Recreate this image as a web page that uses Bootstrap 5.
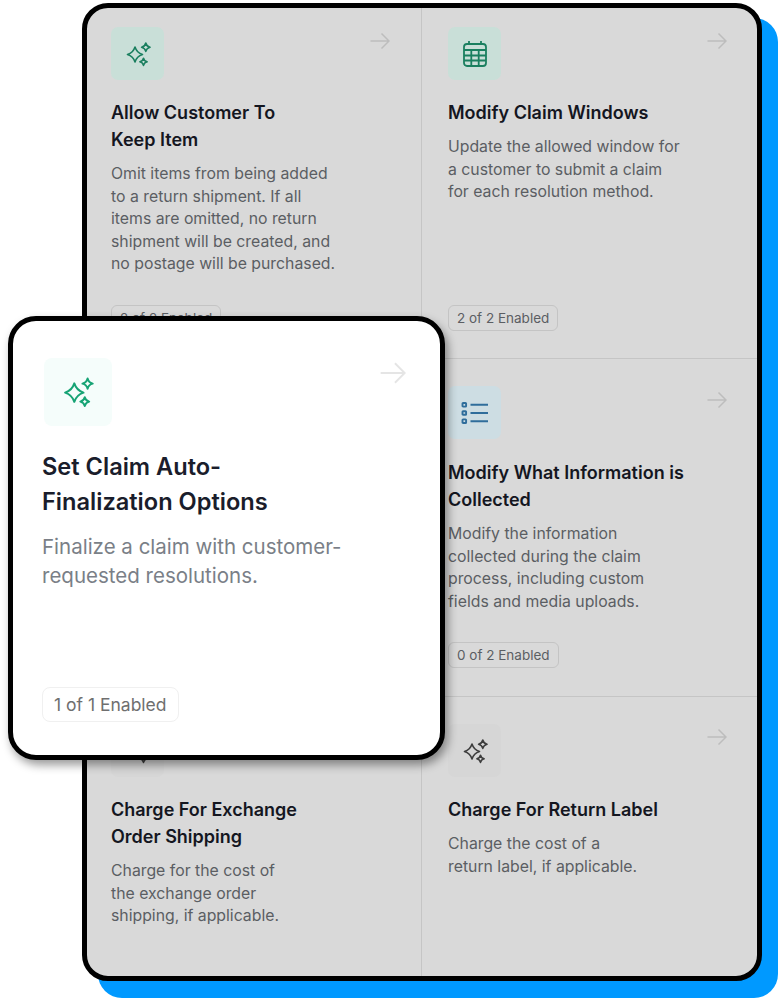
<!DOCTYPE html>
<html lang="en">
<head>
  <meta charset="UTF-8">
  <meta name="viewport" content="width=device-width, initial-scale=1.0">
  <title>Claim Options</title>
  <link rel="stylesheet" href="https://cdn.jsdelivr.net/npm/bootstrap@5.3.0/dist/css/bootstrap.min.css">
  <style>
    body { background: #fff; font-family: Inter, "Noto Sans", sans-serif; overflow: hidden; }
    .stage { position: relative; width: 780px; height: 1000px; padding: 3px 18px 19px 82px; }
    .blue-back { position: absolute; left: 98px; top: 18px; width: 680px; height: 980px; background: #0099ff; border-radius: 24px; }
    .panel { position: relative; height: 978px; background: #d9d9d9; border: 5px solid #000; border-radius: 26px; overflow: hidden; }
    .row-a { height: 351px; }
    .row-b { height: 338px; }
    .row-c { height: 279px; }
    .row-a, .row-b { border-bottom: 1px solid #c5c5c5; }
    .cell { position: relative; padding: 27px 24px 28px 24px; }
    .row-a .cell { padding-top: 19px; padding-bottom: 27px; }
    .cell-left { border-right: 1px solid #c5c5c5; }
    .cell-right { padding-left: 26px; }
    .icon-box { width: 53px; height: 53px; border-radius: 7px; }
    .tone-green { background: #c9dfd8; color: #1a7f5f; }
    .tone-blue { background: #cddde3; color: #2f6d9b; }
    .tone-grey { background: #d6d6d6; color: #3d3d3d; }
    .go-arrow { position: absolute; top: 24px; right: 31px; color: #bdbdbd; }
    .row-b .go-arrow { top: 32px; }
    .row-c .go-arrow { top: 31px; }
    .cell-right .go-arrow { right: 30px; }
    .item-title { margin: 19px 0 10px; font-size: 18px; line-height: 27px; font-weight: 600; color: #14161f; }
    .row-b .item-title { margin-top: 20px; }
    .item-text { margin: 0; font-size: 15.800px; line-height: 22.600px; color: #5b5e63; }
    .count-pill { align-self: flex-start; margin-top: auto; padding: 0 8px; height: 26px; line-height: 24px; font-size: 13.500px; color: #5b5e63; border: 1px solid #c4c4c4; border-radius: 6px; }
    .focus-card { position: absolute; left: 8px; top: 316px; width: 437px; height: 444px; padding: 37px 29px 33px 29px; background: #fff; border: 5px solid #000; border-radius: 28px; box-shadow: 3px 5px 10px rgba(0,0,0,.4); }
    .focus-icon { width: 68px; height: 68px; margin-left: 2px; border-radius: 8px; background: #f5fdfb; color: #16a374; }
    .focus-arrow { position: absolute; top: 40px; right: 34px; color: #e5e5e5; }
    .focus-title { margin: 23px 0 13px; font-size: 23.600px; line-height: 35px; font-weight: 600; color: #1a1d2b; }
    .focus-text { margin: 0; font-size: 20.500px; line-height: 29.200px; color: #7a7f87; }
    .focus-pill { align-self: flex-start; margin-top: auto; padding: 0 11px; height: 35px; line-height: 33px; font-size: 17.500px; color: #6f6f6f; border: 1px solid #f0f0f0; border-radius: 8px; }
  </style>
</head>
<body>
  <svg width="0" height="0" class="d-block">
    <defs>
      <symbol id="sparkle" viewBox="0 0 26 26">
        <g fill="none" stroke="currentColor" stroke-width="1.600" stroke-linejoin="round">
          <path d="M10 6 Q11.800 11.700 17.500 13.500 Q11.800 15.300 10 21 Q8.200 15.300 2.500 13.500 Q8.200 11.700 10 6z"/>
          <path d="M20.800 2 Q21.600 5.400 25 6.200 Q21.600 7 20.800 10.400 Q20 7 16.600 6.200 Q20 5.400 20.800 2z"/>
          <path d="M18.500 17.200 Q19.200 20.100 22.100 20.800 Q19.200 21.500 18.500 24.400 Q17.800 21.500 14.900 20.800 Q17.800 20.100 18.500 17.200z"/>
        </g>
      </symbol>
      <symbol id="arrow" viewBox="0 0 20 18">
        <path d="M0.500 9H19M11.500 1.500 19 9l-7.500 7.500" fill="none" stroke="currentColor" stroke-width="1.500"/>
      </symbol>
    </defs>
  </svg>

  <div class="stage">
    <div class="blue-back"></div>
    <div class="panel">
      <div class="row g-0 row-a">
        <div class="col-6 cell cell-left d-flex flex-column">
          <svg class="go-arrow" width="20" height="18"><use href="#arrow"/></svg>
          <div class="icon-box tone-green d-flex align-items-center justify-content-center">
            <svg width="26" height="26"><use href="#sparkle"/></svg>
          </div>
          <h5 class="item-title">Allow Customer To<br>Keep Item</h5>
          <p class="item-text">Omit items from being added<br>to a return shipment. If all<br>items are omitted, no return<br>shipment will be created, and<br>no postage will be purchased.</p>
          <span class="count-pill">2 of 2 Enabled</span>
        </div>
        <div class="col-6 cell cell-right d-flex flex-column">
          <svg class="go-arrow" width="20" height="18"><use href="#arrow"/></svg>
          <div class="icon-box tone-green d-flex align-items-center justify-content-center">
            <svg width="26" height="28" viewBox="0 0 26 28" fill="none" stroke="currentColor" stroke-width="1.800">
              <rect x="2" y="4" width="22" height="22" rx="3"/>
              <path d="M7 1v3M19 1v3M2 10h22M2 15.500h22M2 20.500h22M9.300 10v16M16.700 10v16"/>
            </svg>
          </div>
          <h5 class="item-title">Modify Claim Windows</h5>
          <p class="item-text">Update the allowed window for<br>a customer to submit a claim<br>for each resolution method.</p>
          <span class="count-pill">2 of 2 Enabled</span>
        </div>
      </div>

      <div class="row g-0 row-b">
        <div class="col-6 cell cell-left"></div>
        <div class="col-6 cell cell-right d-flex flex-column">
          <svg class="go-arrow" width="20" height="18"><use href="#arrow"/></svg>
          <div class="icon-box tone-blue d-flex align-items-center justify-content-center">
            <svg width="28" height="24" viewBox="0 0 28 24" fill="none" stroke="currentColor" stroke-width="1.900">
              <rect x="1.500" y="2" width="3.600" height="3.600" rx=".6"/>
              <rect x="1.500" y="10.200" width="3.600" height="3.600" rx=".6"/>
              <rect x="1.500" y="18.400" width="3.600" height="3.600" rx=".6"/>
              <path d="M9.500 3.800h17.500M9.500 12h17.500M9.500 20.200h17.500"/>
            </svg>
          </div>
          <h5 class="item-title">Modify What Information is<br>Collected</h5>
          <p class="item-text">Modify the information<br>collected during the claim<br>process, including custom<br>fields and media uploads.</p>
          <span class="count-pill">0 of 2 Enabled</span>
        </div>
      </div>

      <div class="row g-0 row-c">
        <div class="col-6 cell cell-left d-flex flex-column">
          <div class="icon-box tone-grey d-flex align-items-center justify-content-center">
            <svg width="26" height="26"><use href="#sparkle"/></svg>
          </div>
          <h5 class="item-title">Charge For Exchange<br>Order Shipping</h5>
          <p class="item-text">Charge for the cost of<br>the exchange order<br>shipping, if applicable.</p>
        </div>
        <div class="col-6 cell cell-right d-flex flex-column">
          <svg class="go-arrow" width="20" height="18"><use href="#arrow"/></svg>
          <div class="icon-box tone-grey d-flex align-items-center justify-content-center">
            <svg width="26" height="26"><use href="#sparkle"/></svg>
          </div>
          <h5 class="item-title">Charge For Return Label</h5>
          <p class="item-text">Charge the cost of a<br>return label, if applicable.</p>
        </div>
      </div>
    </div>

    <div class="focus-card d-flex flex-column">
      <svg class="focus-arrow" width="26" height="24"><use href="#arrow"/></svg>
      <div class="focus-icon d-flex align-items-center justify-content-center">
        <svg width="32" height="32"><use href="#sparkle"/></svg>
      </div>
      <h4 class="focus-title">Set Claim Auto-<br>Finalization Options</h4>
      <p class="focus-text">Finalize a claim with customer-<br>requested resolutions.</p>
      <span class="focus-pill">1 of 1 Enabled</span>
    </div>
  </div>
</body>
</html>
